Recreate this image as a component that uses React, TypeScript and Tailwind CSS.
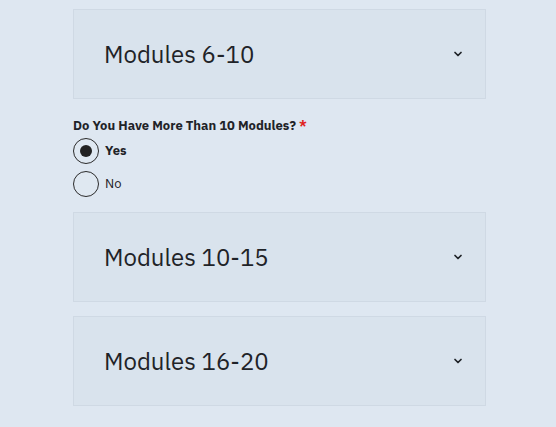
import { ChevronDown } from "lucide-react";

type ModuleCardProps = {
  title: string;
};

function ModuleCard({ title }: ModuleCardProps) {
  return (
    <button
      type="button"
      className="flex h-[90px] w-full items-center justify-between border border-[#cfd9e4] bg-[#d9e3ed] pl-[30px] pr-[21px] text-left"
    >
      <span className="text-[24px] leading-none text-[#1f2328]">{title}</span>
      <ChevronDown className="h-[12px] w-[12px] text-[#1f2328]" strokeWidth={3.5} />
    </button>
  );
}

function Radio({ label, checked }: { label: string; checked?: boolean }) {
  return (
    <label className="flex items-center gap-[6px]">
      <span className="flex h-[26px] w-[26px] items-center justify-center rounded-full border border-[#2b2b2b] bg-[#dfe8f1]">
        {checked ? <span className="h-[12px] w-[12px] rounded-full bg-[#222]" /> : null}
      </span>
      <span className={checked ? "text-[13px] font-bold text-[#1f2328]" : "text-[13px] text-[#1f2328]"}>
        {label}
      </span>
    </label>
  );
}

export default function App() {
  return (
    <div className="min-h-[427px] bg-[#dee7f1] pt-[9px] font-['IBM_Plex_Sans','Noto_Sans',sans-serif]">
      <div className="ml-[73px] w-[413px]">
        <ModuleCard title="Modules 6-10" />

        <div className="pt-[18px] pb-[15px]">
          <p className="text-[13px] leading-[18px] font-bold text-[#1f2328]">
            Do You Have More Than 10 Modules? <span className="text-[#e0221d]">*</span>
          </p>
          <div className="mt-[3px] flex flex-col gap-[7px]">
            <Radio label="Yes" checked />
            <Radio label="No" />
          </div>
        </div>

        <div className="flex flex-col gap-[14px]">
          <ModuleCard title="Modules 10-15" />
          <ModuleCard title="Modules 16-20" />
        </div>
      </div>
    </div>
  );
}
